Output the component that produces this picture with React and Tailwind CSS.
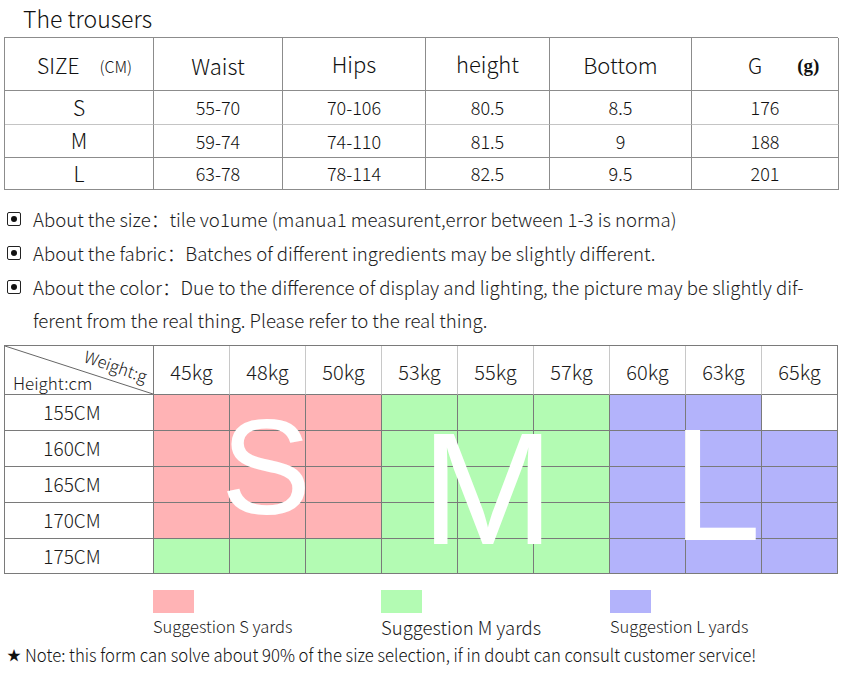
import React from 'react';

// 上段：パンツのサイズ表
const sizeRows = [
  { size: 'S', waist: '55-70', hips: '70-106', height: '80.5', bottom: '8.5', g: '176' },
  { size: 'M', waist: '59-74', hips: '74-110', height: '81.5', bottom: '9', g: '188' },
  { size: 'L', waist: '63-78', hips: '78-114', height: '82.5', bottom: '9.5', g: '201' },
];

const weights = ['45kg', '48kg', '50kg', '53kg', '55kg', '57kg', '60kg', '63kg', '65kg'];
const heights = ['155CM', '160CM', '165CM', '170CM', '175CM'];

// セルの色：体重列・身長行ごとの推奨サイズ
function cellColor(row, col) {
  if (col <= 2) return row === 4 ? 'bg-[#b3fbb3]' : 'bg-[#ffb3b5]';
  if (col <= 5) return 'bg-[#b3fbb3]';
  if (col === 8 && row === 0) return 'bg-white';
  return 'bg-[#b3b3fb]';
}

function Bullet() {
  return (
    <span className="flex-shrink-0 w-[14px] h-[14px] border-[1.5px] border-[#222] rounded-[2px] flex items-center justify-center mr-[12px]">
      <span className="w-[6px] h-[6px] rounded-full bg-[#111]" />
    </span>
  );
}

function SizeTable() {
  const cell = 'border-r border-b border-[#8c8c8c] flex items-center justify-center';
  return (
    <div className="ml-[4px] w-[834px] grid grid-cols-[149px_129px_143px_124px_142px_147px] grid-rows-[53px_34px_33px_32px] border-l border-t border-[#8c8c8c] text-[#111]">
      <div className={`${cell} justify-start pl-[32px] pt-[4px]`}>
        <span className="text-[21px]">SIZE</span>
        <span className="text-[16px] ml-[20px]">(CM)</span>
      </div>
      <div className={`${cell} text-[22px] pt-[2px]`}>Waist</div>
      <div className={`${cell} text-[22px] pb-[2px]`}>Hips</div>
      <div className={`${cell} text-[22px] pb-[2px]`}>height</div>
      <div className={`${cell} text-[22px]`}>Bottom</div>
      <div className={`${cell} justify-start pt-[4px]`}>
        <span className="text-[21px] ml-[56px]">G</span>
        <span className="text-[19px] font-bold ml-[35px] font-['Liberation_Serif',serif]">(g)</span>
      </div>
      {sizeRows.map((r, i) => {
        const line = i === 0 ? 'border-b-[#c4c4c4]' : '';
        return (
          <React.Fragment key={r.size}>
            <div className={`${cell} ${line} text-[21px]`}>{r.size}</div>
            <div className={`${cell} ${line} text-[18px]`}>{r.waist}</div>
            <div className={`${cell} ${line} text-[18px]`}>{r.hips}</div>
            <div className={`${cell} ${line} text-[18px]`}>{r.height}</div>
            <div className={`${cell} ${line} text-[18px]`}>{r.bottom}</div>
            <div className={`${cell} ${line} text-[18px]`}>{r.g}</div>
          </React.Fragment>
        );
      })}
    </div>
  );
}

function WeightTable() {
  const big = "absolute leading-none text-white font-['Liberation_Sans',Arial,sans-serif]";
  return (
    <div className="relative ml-[4px] w-[834px] grid grid-cols-[149px_repeat(9,minmax(0,1fr))] grid-rows-[49px_36px_36px_36px_36px_35px] border-l border-t border-[#7a7a7a] text-[#1a1a1a]">
      {/* 斜線入りの見出しセル */}
      <div className="relative border-r border-b border-[#7a7a7a]">
        <svg className="absolute inset-0 w-full h-full" viewBox="0 0 148 48" preserveAspectRatio="none">
          <line x1="0" y1="0" x2="148" y2="48" stroke="#666" strokeWidth="1" />
        </svg>
        <span className="absolute left-[80px] top-[1px] text-[16.5px] leading-none rotate-[19deg] origin-left">Weight:g</span>
        <span className="absolute left-[8px] top-[28px] text-[17px] leading-none">Height:cm</span>
      </div>
      {weights.map((w, i) => (
        <div key={w} className={`border-b border-[#7a7a7a] flex items-center justify-center text-[20px] pt-[4px] ${i === 8 ? 'border-r border-r-[#7a7a7a]' : 'border-r border-r-[#c8c8c8]'}`}>
          {w}
        </div>
      ))}
      {heights.map((h, r) => (
        <React.Fragment key={h}>
          <div className="border-r border-b border-[#7a7a7a] flex items-center justify-center pr-[14px] text-[19px] bg-white">{h}</div>
          {weights.map((w, c) => (
            <div key={w} className={`border-r border-b border-[#7a7a7a] ${cellColor(r, c)}`} />
          ))}
        </React.Fragment>
      ))}
      {/* 大きなサイズ文字（表の上に重ねる） */}
      <span className={`${big} text-[135px] left-[216px] top-[54px]`}>S</span>
      <span className={`${big} text-[160px] left-[416px] top-[63px]`}>M</span>
      <span className={`${big} text-[160px] left-[667px] top-[59px]`}>L</span>
    </div>
  );
}

function Legend({ color, label, big }) {
  return (
    <div className="flex flex-col items-start">
      <div className={`w-[41px] h-[23px] ${color}`} />
      <span className={`mt-[1px] whitespace-nowrap text-[#1a1a1a] ${big ? 'text-[18.5px]' : 'text-[16.5px]'}`}>{label}</span>
    </div>
  );
}

export default function App() {
  return (
    <div className="w-[851px] h-[683px] bg-white overflow-hidden font-light font-['Noto_Sans_CJK_SC','Noto_Sans',sans-serif]">
      <h1 className="h-[37px] pl-[23px] flex items-center text-[23px] font-light text-[#111] leading-none">The trousers</h1>
      <SizeTable />

      {/* 注意書き */}
      <div className="mt-[12px] pl-[7px] text-[18.6px] text-[#1c1c1c] leading-[34px]">
        <div className="flex items-center">
          <Bullet />
          <span>About the size：tile vo1ume (manua1 measurent,error between 1-3 is norma)</span>
        </div>
        <div className="flex items-center">
          <Bullet />
          <span>About the fabric：Batches of different ingredients may be slightly different.</span>
        </div>
        <div className="flex items-start">
          <span className="h-[34px] flex items-center"><Bullet /></span>
          <span className="leading-[33px]">
            About the color：Due to the difference of display and lighting, the picture may be slightly dif-
            <br />
            ferent from the real thing. Please refer to the real thing.
          </span>
        </div>
      </div>

      <div className="mt-[9px]">
        <WeightTable />
      </div>

      {/* 凡例 */}
      <div className="mt-[16px] flex">
        <div className="ml-[153px] w-[228px]"><Legend color="bg-[#ffb3b5]" label="Suggestion S yards" /></div>
        <div className="w-[229px]"><Legend color="bg-[#b3fbb3]" label="Suggestion M yards" big /></div>
        <Legend color="bg-[#b3b3fb]" label="Suggestion L yards" />
      </div>

      <div className="mt-0 pl-[7px] flex items-center text-[17.5px] text-[#111] whitespace-nowrap">
        <span className="text-[14px] mr-[4px]">★</span>
        <span className="inline-block origin-left scale-x-[0.955]">Note: this form can solve about 90% of the size selection, if in doubt can consult customer service!</span>
      </div>
    </div>
  );
}
